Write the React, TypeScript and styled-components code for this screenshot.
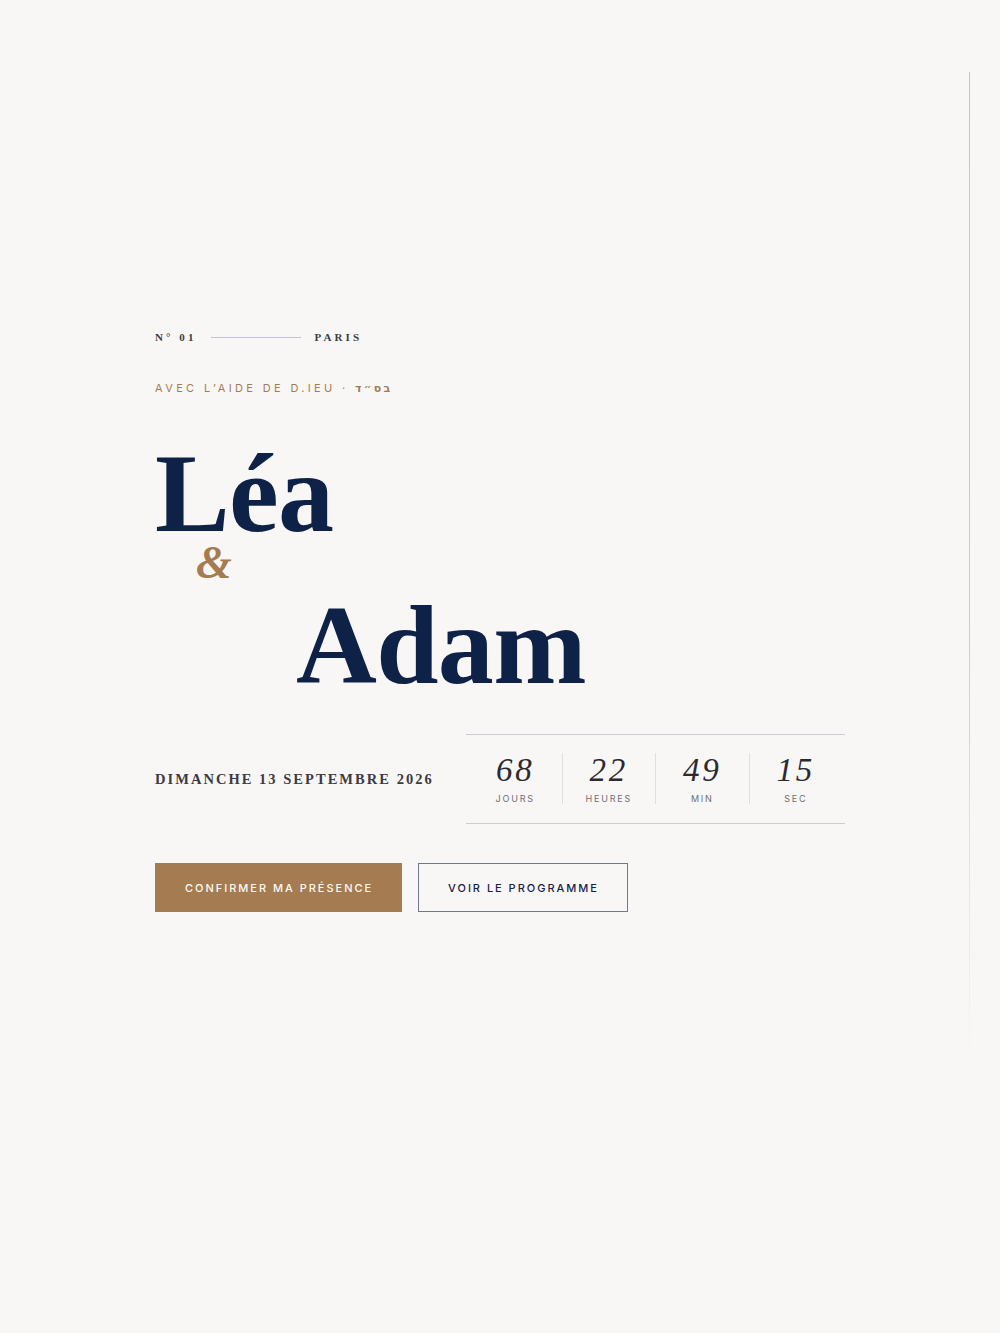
import styled, { createGlobalStyle } from "styled-components";

const GlobalStyle = createGlobalStyle`
  html, body {
    margin: 0;
    padding: 0;
    background: #f9f7f6;
  }
  * {
    box-sizing: border-box;
  }
`;

const countdown = [
  { value: "68", label: "Jours" },
  { value: "22", label: "Heures" },
  { value: "49", label: "Min" },
  { value: "15", label: "Sec" },
];

function App() {
  return (
    <Page>
      <GlobalStyle />
      <SideRule />
      <Hero>
        <Meta>
          <MetaText>N° 01</MetaText>
          <MetaRule />
          <MetaText>Paris</MetaText>
        </Meta>

        <Blessing>
          Avec l’aide de D.ieu · <Hebrew lang="he">בס״ד</Hebrew>
        </Blessing>

        <Names>
          <Name>Léa</Name>
          <Amp>&amp;</Amp>
          <Name $indent={141} $gap={12}>
            Adam
          </Name>
        </Names>

        <DateRow>
          <DateText>Dimanche 13 septembre 2026</DateText>
          <Countdown>
            {countdown.map((c) => (
              <Cell key={c.label}>
                <Number>{c.value}</Number>
                <Unit>{c.label}</Unit>
              </Cell>
            ))}
          </Countdown>
        </DateRow>

        <Actions>
          <Button $primary>Confirmer ma présence</Button>
          <Button>Voir le programme</Button>
        </Actions>
      </Hero>
    </Page>
  );
}

export default App;

const Page = styled.div`
  position: relative;
  min-height: 1333px;
  background: #f9f7f6;
  overflow: hidden;
`;

// thin hairline down the right edge, fading out towards the bottom
const SideRule = styled.div`
  position: absolute;
  top: 72px;
  right: 30px;
  width: 1px;
  height: 1000px;
  background: linear-gradient(
    to bottom,
    #c6c3c9 0%,
    #cdcacf 55%,
    rgba(220, 217, 222, 0) 100%
  );
`;

const Hero = styled.main`
  display: flex;
  flex-direction: column;
  align-items: flex-start;
  padding: 330px 0 0 155px;
`;

const Meta = styled.div`
  display: flex;
  align-items: center;
  height: 14px;
`;

const MetaText = styled.span`
  font-family: "Liberation Serif", serif;
  font-weight: 700;
  font-size: 11px;
  line-height: 14px;
  letter-spacing: 0.28em;
  text-transform: uppercase;
  color: #3d3d46;
`;

const MetaRule = styled.span`
  display: block;
  width: 90px;
  height: 1px;
  margin: 0 14px 0 14px;
  background: #c4c2d6;
`;

const Blessing = styled.div`
  margin-top: 37px;
  font-family: Inter, "DejaVu Sans", sans-serif;
  font-size: 11px;
  line-height: 14px;
  letter-spacing: 0.305em;
  text-transform: uppercase;
  color: #a57c52;
`;

const Hebrew = styled.span`
  font-family: "DejaVu Sans", sans-serif;
  font-weight: 700;
  letter-spacing: 0.2em;
`;

const Names = styled.div`
  display: flex;
  flex-direction: column;
  align-items: flex-start;
  margin-top: 47px;
`;

const Name = styled.h1<{ $indent?: number; $gap?: number }>`
  margin: ${(p) => p.$gap ?? 0}px 0 0 ${(p) => p.$indent ?? 0}px;
  font-family: "Liberation Serif", serif;
  font-weight: 700;
  font-size: 112px;
  line-height: 100px;
  letter-spacing: -0.006em;
  color: #0e2147;
`;

const Amp = styled.span`
  display: block;
  margin-left: 41px;
  font-family: "Liberation Serif", serif;
  font-style: italic;
  font-weight: 700;
  font-size: 46px;
  line-height: 40px;
  color: #a57c52;
`;

const DateRow = styled.div`
  display: flex;
  align-items: center;
  margin-top: 39px;
`;

const DateText = styled.div`
  width: 311px;
  font-family: "Liberation Serif", serif;
  font-weight: 700;
  font-size: 14.5px;
  letter-spacing: 0.14em;
  text-transform: uppercase;
  color: #3b3b45;
`;

const Countdown = styled.div`
  display: flex;
  width: 379px;
  padding: 18px 3px 19px;
  border-top: 1px solid #cdcbd4;
  border-bottom: 1px solid #cdcbd4;
`;

const Cell = styled.div`
  flex: 1;
  display: flex;
  flex-direction: column;
  align-items: center;

  & + & {
    border-left: 1px solid #e0dee2;
  }
`;

const Number = styled.span`
  padding-top: 1px;
  font-family: "Liberation Serif", serif;
  font-style: italic;
  font-size: 33px;
  line-height: 32px;
  letter-spacing: 0.08em;
  color: #2a2a32;
`;

const Unit = styled.span`
  margin-top: 7px;
  font-family: Inter, sans-serif;
  font-size: 9px;
  line-height: 11px;
  letter-spacing: 0.2em;
  text-transform: uppercase;
  color: #6e6e76;
`;

const Actions = styled.div`
  display: flex;
  gap: 16px;
  margin-top: 39px;
`;

const Button = styled.button<{ $primary?: boolean }>`
  height: 49px;
  padding: 0 28px 0 29px;
  border: 1px solid ${(p) => (p.$primary ? "#a57c52" : "#6d7896")};
  background: ${(p) => (p.$primary ? "#a57c52" : "transparent")};
  color: ${(p) => (p.$primary ? "#fbf8f4" : "#132449")};
  font-family: Inter, sans-serif;
  font-size: 11px;
  font-weight: 500;
  letter-spacing: 0.18em;
  text-transform: uppercase;
  cursor: pointer;
`;
